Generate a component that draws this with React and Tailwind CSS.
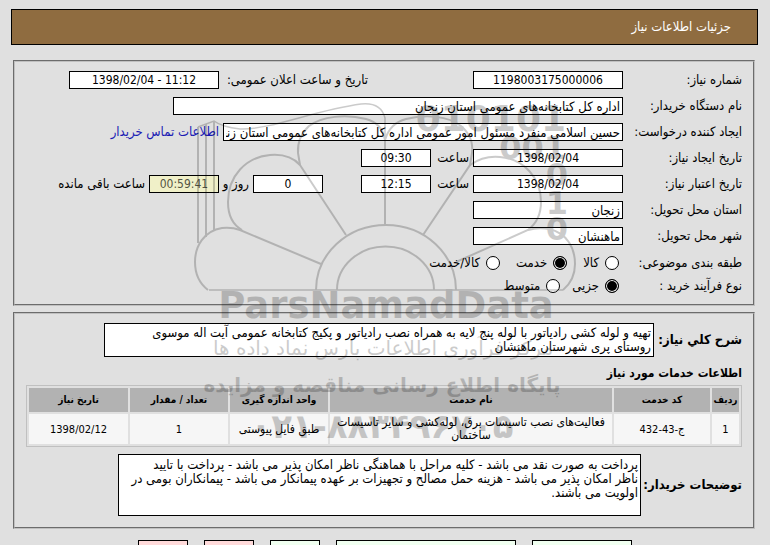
const field = "h-[18px] border border-black px-[2px] leading-4";

function NumberField({ label, value, className = "", tone = "bg-white text-black" }) {
  return (
    <input
      aria-label={label}
      defaultValue={value}
      dir="ltr"
      className={`${field} text-center text-[12px] ${tone} ${className}`}
    />
  );
}

function TextField({ label, value, className = "" }) {
  return (
    <input
      aria-label={label}
      defaultValue={value}
      className={`${field} bg-white text-[13px] text-black ${className}`}
    />
  );
}

function Row({ label, children }) {
  return (
    <div className="flex h-[18px] items-center">
      <span className="w-[119px] shrink-0 whitespace-nowrap">{label}</span>
      {children}
    </div>
  );
}

function Radio({ name, label, checked }) {
  return (
    <label className="flex items-center gap-[6px] whitespace-nowrap">
      <input
        type="radio"
        name={name}
        defaultChecked={checked}
        className="size-[14px] appearance-none rounded-full border border-black bg-white checked:bg-black checked:inset-ring checked:inset-ring-white"
      />
      {label}
    </label>
  );
}

function Watermark() {
  return (
    <svg
      viewBox="0 0 770 545"
      width="770"
      height="545"
      aria-hidden="true"
      className="pointer-events-none absolute top-0 left-0 opacity-20"
    >
      <g fill="none" stroke="black" strokeWidth="2">
        <path d="M209 290H563" strokeWidth="1.5" />
        <path d="M316 290A70 65 0 0 1 456 290M337 290A48 43 0 0 1 434 290" />
        <path d="M321 264L240 230Q232 227 222 228C204 231 195 246 195 262Q195 280 208 290" />
        <path d="M346 235L300 165C292 156 282 154 270 155C246 157 228 176 228 202Q228 222 242 230" />
        <path d="M385 225V140Q382 123 366 119C346 114 322 116 309 126Q297 137 298 153L300 165" />
        <path d="M385 140Q390 123 406 119C426 114 448 116 461 126Q474 137 472 153L470 165L423 235" />
        <path d="M470 165C480 158 490 156 500 157C524 159 541 178 541 202Q541 220 528 230L456 262" />
        <path d="M528 230Q538 227 549 229C567 233 575 248 575 264Q575 280 563 290" />
        <path
          d="M385 140V118Q381 102 361 104C315 110 270 130 240 129Q222 127 214 121L198 127"
          strokeWidth="1.5"
        />
        <path d="M198 127V243M206 124V237M214 121V231" />
      </g>
      <g
        fill="black"
        direction="ltr"
        textAnchor="end"
        fontSize="32"
        fontWeight="700"
        fontFamily="'DejaVu Sans', sans-serif"
      >
        <text x="566" y="131" fontSize="36">010101</text>
        <text x="566" y="159">001</text>
        <text x="568" y="186">0</text>
        <text x="568" y="214">1</text>
        <text x="568" y="240">0</text>
      </g>
      <g fill="black" textAnchor="middle" direction="rtl" fontFamily="'DejaVu Sans', sans-serif">
        <text x="386" y="318" direction="ltr" fontSize="37" fontWeight="700">
          ParsNamadData
        </text>
        <text x="383" y="355" fontSize="20">
          مرکز فرآوری اطلاعات پارس نماد داده ها
        </text>
        <text x="382" y="392" fontSize="20" fontWeight="700">
          پایگاه اطلاع رسانی مناقصه و مزایده
        </text>
        <text x="382" y="438" direction="ltr" fontSize="34" fontWeight="700">
          ۰۲۱-۸۸۳۴۹۶۷۰۵
        </text>
      </g>
    </svg>
  );
}

const panel = "border-2 border-[#c0c0c0] [border-style:groove] px-[11px] pt-[9px]";

export default function App() {
  return (
    <div
      dir="rtl"
      className="relative h-screen overflow-hidden bg-[#e0e0e0] pt-[9px] pr-3 pl-[11px] font-['DejaVu_Sans_Condensed','DejaVu_Sans',sans-serif] text-[13px] leading-[14px] text-black"
    >
      <h1 className="flex h-9 items-center border border-black bg-[#8f6c40] px-[26px] text-white">
        جزئیات اطلاعات نیاز
      </h1>

      <main className="mt-[15px] flex flex-col gap-[6px] pr-[3px] pl-[2px]">
        <section className={`${panel} pb-[9px]`}>
          <div className="flex flex-col gap-2">
            <Row label="شماره نیاز:">
              <NumberField label="شماره نیاز" value="1198003175000006" className="w-[150px]" />
              <span className="mr-[105px] w-[149px] whitespace-nowrap">تاریخ و ساعت اعلان عمومی:</span>
              <NumberField label="تاریخ و ساعت اعلان عمومی" value="1398/02/04 - 11:12" className="w-[150px]" />
            </Row>
            <Row label="نام دستگاه خریدار:">
              <TextField label="نام دستگاه خریدار" value="اداره کل کتابخانه‌های عمومی استان زنجان" className="w-[450px]" />
            </Row>
            <Row label="ایجاد کننده درخواست:">
              <TextField
                label="ایجاد کننده درخواست"
                value="حسین اسلامی منفرد مسئول امور عمومی اداره کل کتابخانه‌های عمومی استان زنجان"
                className="w-[400px]"
              />
              <a href="#contact" className="mr-1 whitespace-nowrap text-[#1a1ab4]">اطلاعات تماس خریدار</a>
            </Row>
            <Row label="تاریخ ایجاد نیاز:">
              <NumberField label="تاریخ ایجاد نیاز" value="1398/02/04" className="w-[150px]" />
              <span className="w-[42px] pr-1">ساعت</span>
              <NumberField label="ساعت ایجاد" value="09:30" className="w-[70px]" />
            </Row>
            <Row label="تاریخ اعتبار نیاز:">
              <NumberField label="تاریخ اعتبار نیاز" value="1398/02/04" className="w-[150px]" />
              <span className="w-[42px] pr-1">ساعت</span>
              <NumberField label="ساعت اعتبار" value="12:15" className="w-[70px]" />
              <NumberField label="روز" value="0" className="mr-[38px] w-[70px]" />
              <span className="w-[34px] pr-1 whitespace-nowrap">روز و</span>
              <NumberField
                label="ساعت باقی مانده"
                value="00:59:41"
                className="w-[70px]"
                tone="bg-[#f0f0c8] text-[#555544]"
              />
              <span className="mr-1 whitespace-nowrap">ساعت باقی مانده</span>
            </Row>
            <Row label="استان محل تحویل:">
              <TextField label="استان محل تحویل" value="زنجان" className="w-[150px]" />
            </Row>
            <Row label="شهر محل تحویل:">
              <TextField label="شهر محل تحویل" value="ماهنشان" className="w-[150px]" />
            </Row>
          </div>
          <div className="mt-[9px] flex flex-col gap-[5px]">
            <Row label="طبقه بندی موضوعی:">
              <div className="flex gap-4 pr-1">
                <Radio name="subject" label="کالا" />
                <Radio name="subject" label="خدمت" checked />
                <Radio name="subject" label="کالا/خدمت" />
              </div>
            </Row>
            <Row label="نوع فرآیند خرید :">
              <div className="flex gap-3 pr-1">
                <Radio name="process" label="جزیی" checked />
                <Radio name="process" label="متوسط" />
              </div>
            </Row>
          </div>
        </section>

        <section className={`${panel} pb-[11px]`}>
          <div className="flex items-center">
            <label htmlFor="summary" className="w-[88px] font-bold whitespace-nowrap">شرح کلي نیاز:</label>
            <textarea
              id="summary"
              className="h-[34px] w-[550px] resize-none overflow-hidden border border-black bg-white px-[2px] py-[2px]"
              defaultValue={"تهیه و لوله کشی رادیاتور با لوله پنج لایه به همراه نصب رادیاتور و پکیج کتابخانه عمومی آیت اله موسوی\nروستای پری شهرستان ماهنشان"}
            />
          </div>
          <h2 className="mt-[9px] text-[12px] leading-[14px] font-bold">اطلاعات خدمات مورد نیاز</h2>
          <table className="mt-[5px] w-full table-fixed border-separate border-spacing-[2px] border border-[#c0c0c0] text-center">
            <colgroup>
              <col className="w-[27px]" />
              <col className="w-[96px]" />
              <col />
              <col className="w-[98px]" />
              <col className="w-[98px]" />
              <col className="w-[99px]" />
            </colgroup>
            <thead>
              <tr className="h-6 bg-[#b2b2b2] text-[10px]">
                <th>ردیف</th>
                <th>کد خدمت</th>
                <th>نام خدمت</th>
                <th>واحد اندازه گیری</th>
                <th>تعداد / مقدار</th>
                <th>تاریخ نیاز</th>
              </tr>
            </thead>
            <tbody>
              <tr className="h-[30px] bg-[#f6f6f6] text-[11px] leading-[13px]">
                <td>1</td>
                <td>ج-43-432</td>
                <td className="text-[12px] leading-[13px]">
                  فعالیت‌های نصب تاسیسات برق، لوله‌کشی و سایر تاسیسات ساختمان
                </td>
                <td className="text-[12px] leading-[13px]">طبق فایل پیوستی</td>
                <td>1</td>
                <td>1398/02/12</td>
              </tr>
            </tbody>
          </table>
          <div className="mt-[7px] flex items-center">
            <label htmlFor="notes" className="w-[101px] font-bold whitespace-nowrap">توضیحات خریدار:</label>
            <textarea
              id="notes"
              className="h-[62px] w-[523px] resize-none overflow-hidden border border-black bg-white px-[2px] py-[3px]"
              defaultValue={"پرداخت به صورت نقد می باشد - کلیه مراحل با هماهنگی ناظر امکان پذیر می باشد - پرداخت با تایید\nناظر امکان پذیر می باشد - هزینه حمل مصالح و تجهیزات بر عهده پیمانکار می باشد - پیمانکاران بومی در\nاولویت می باشند."}
            />
          </div>
        </section>
      </main>

      <div className="mt-[11px] flex justify-center gap-4">
        <button aria-label="پاسخ به نیاز" className="h-6 w-[100px] border border-black bg-[#f0fff0]" />
        <button aria-label="مشاهده مدارک پیوستی" className="h-6 w-[180px] border border-black bg-[#f0fff0]" />
        <button aria-label="چاپ" className="h-6 w-[50px] border border-black bg-[#f0fff0]" />
        <button aria-label="بازگشت" className="h-6 w-[50px] border border-black bg-[#ffdada]" />
        <button aria-label="خروج" className="h-6 w-[50px] border border-black bg-[#ffdada]" />
      </div>
      <Watermark />
    </div>
  );
}
